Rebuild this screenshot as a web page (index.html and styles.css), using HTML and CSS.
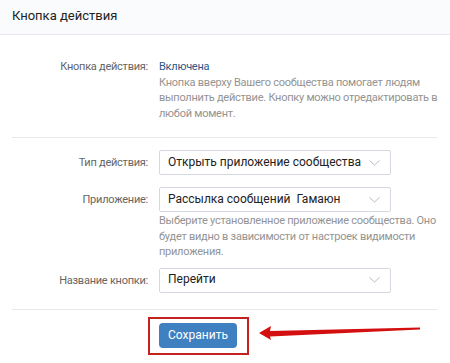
FILE: index.html
```html
<!DOCTYPE html>
<html lang="ru">
  <head>
    <meta charset="UTF-8" />
    <meta name="viewport" content="width=device-width, initial-scale=1.0" />
    <title>Кнопка действия</title>
    <link rel="stylesheet" href="styles.css">
  </head>
  <body>
    <div class="page">
      <div class="page-header">Кнопка действия</div>

      <div class="section">
        <div class="row">
          <div class="row-label">Кнопка действия:</div>
          <div class="row-body">
            <div class="status">Включена</div>
            <div class="hint">
              Кнопка вверху Вашего сообщества помогает людям выполнить действие. Кнопку можно отредактировать в любой момент.
            </div>
          </div>
        </div>
      </div>

      <div class="separator"></div>

      <div class="section section-fields">
        <div class="row row-field">
          <div class="row-label">Тип действия:</div>
          <div class="row-body">
            <div class="dropdown">
              <span>Открыть приложение сообщества</span>
              <svg class="chevron" width="11" height="6" viewBox="0 0 11 6">
                <polyline points="0.5,0.5 5.5,5 10.5,0.5" />
              </svg>
            </div>
          </div>
        </div>

        <div class="row row-field">
          <div class="row-label">Приложение:</div>
          <div class="row-body">
            <div class="dropdown">
              <span>Рассылка сообщений&nbsp; Гамаюн</span>
              <svg class="chevron" width="11" height="6" viewBox="0 0 11 6">
                <polyline points="0.5,0.5 5.5,5 10.5,0.5" />
              </svg>
            </div>
            <div class="hint hint-small">
              Выберите установленное приложение сообщества. Оно будет видно в зависимости от настроек видимости приложения.
            </div>
          </div>
        </div>

        <div class="row row-field">
          <div class="row-label">Название кнопки:</div>
          <div class="row-body">
            <div class="dropdown">
              <span>Перейти</span>
              <svg class="chevron" width="11" height="6" viewBox="0 0 11 6">
                <polyline points="0.5,0.5 5.5,5 10.5,0.5" />
              </svg>
            </div>
          </div>
        </div>
      </div>

      <div class="separator"></div>

      <div class="footer">
        <span class="highlight">
          <button class="save-button">Сохранить</button>
        </span>
        <svg class="arrow" width="162" height="16" viewBox="0 0 162 16">
          <polygon points="0,7 12,0 11,5 161,1.5 161,3.5 11,10.5 12,14" />
        </svg>
      </div>
    </div>
  </body>
</html>
```

FILE: styles.css
```css
* {
  margin: 0;
  padding: 0;
  box-sizing: border-box;
}

body {
  background-color: #fff;
  font-family: Roboto, "Open Sans", "Liberation Sans", sans-serif;
  font-size: 11px;
  line-height: 15.5px;
  letter-spacing: -0.25px;
  color: #000;
}

.page {
  width: 450px;
  min-height: 363px;
}

.page-header {
  height: 35px;
  padding: 0 12px;
  background-color: #fafbfc;
  border-bottom: 1px solid #e7e8ec;
  font-size: 13px;
  line-height: 31px;
  letter-spacing: 0;
  color: #222;
}

.section {
  padding-top: 24px;
  padding-bottom: 16px;
}

.section-fields {
  padding-top: 12px;
  padding-bottom: 16px;
}

.row {
  display: grid;
  grid-template-columns: 148px 1fr;
  column-gap: 11px;
  padding-right: 8px;
}

.row-field + .row-field {
  margin-top: 12px;
}

.row-field:last-child {
  margin-top: 8px;
}

.row-label {
  text-align: right;
  color: #656565;
}

.row-field .row-label {
  line-height: 25px;
}

.status {
  color: #2a5885;
}

.hint {
  color: #939393;
}

.hint-small {
  margin-top: 1px;
}

.separator {
  height: 1px;
  margin: 0 13px 0 12px;
  background-color: #e7e8ec;
}

.dropdown {
  width: 232px;
  height: 25px;
  display: flex;
  align-items: center;
  justify-content: space-between;
  padding: 0 8px 0 8px;
  border: 1px solid #d3d9de;
  border-radius: 2px;
  font-size: 12px;
  letter-spacing: 0;
  color: #222;
}

.chevron {
  fill: none;
  stroke: #b4bcc6;
  stroke-width: 1;
  margin-right: 2px;
}

.footer {
  display: flex;
  align-items: center;
  padding: 7px 0 0 148px;
}

.highlight {
  display: inline-flex;
  padding: 4px 10px 5px 9px;
  border: 2px solid #c4221f;
}

.save-button {
  width: 78px;
  height: 25px;
  border: none;
  border-radius: 4px;
  background-color: #3f80c0;
  color: #fff;
  font-family: inherit;
  font-size: 12px;
  letter-spacing: 0;
}

.arrow {
  margin-left: 10px;
  margin-top: -4px;
  fill: #d3100f;
}
```
